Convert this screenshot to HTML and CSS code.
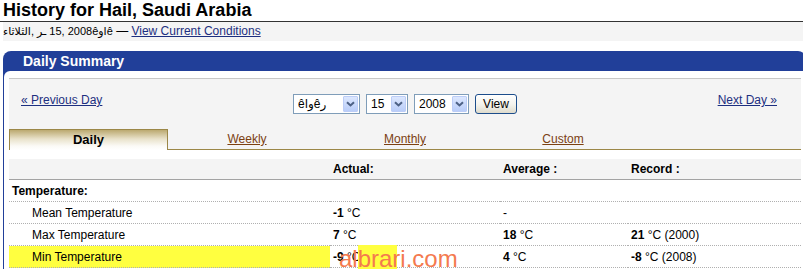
FILE: index.html
```html
<!DOCTYPE html>
<html>
<head>
<meta charset="utf-8">
<title>History for Hail, Saudi Arabia</title>
<link rel="stylesheet" href="styles.css">
</head>
<body>
<div class="page">
  <h1 class="title">History for Hail, Saudi Arabia</h1>
  <div class="subline"><span class="date"><bdi>الثلاثاء</bdi>, <bdi>ـر</bdi> 15, 2008<bdo dir="ltr">êواê</bdo></span> — <a href="#" class="link">View Current Conditions</a></div>

  <div class="box">
    <div class="box-head">Daily Summary</div>
    <div class="box-body">
      <div class="panel">
        <div class="nav">
          <a href="#" class="link nav-prev">« Previous Day</a>
          <form class="picker">
            <div class="select w-month"><span class="sel-text"><bdo dir="ltr">êاوêر</bdo></span><span class="sel-btn"><svg width="9" height="6" viewBox="0 0 9 6"><path d="M1 1.2 L4.5 4.5 L8 1.2" fill="none" stroke="#4d6185" stroke-width="2"/></svg></span></div>
            <div class="select w-day"><span class="sel-text">15</span><span class="sel-btn"><svg width="9" height="6" viewBox="0 0 9 6"><path d="M1 1.2 L4.5 4.5 L8 1.2" fill="none" stroke="#4d6185" stroke-width="2"/></svg></span></div>
            <div class="select w-year"><span class="sel-text">2008</span><span class="sel-btn"><svg width="9" height="6" viewBox="0 0 9 6"><path d="M1 1.2 L4.5 4.5 L8 1.2" fill="none" stroke="#4d6185" stroke-width="2"/></svg></span></div>
            <button class="view-btn" type="button">View</button>
          </form>
          <a href="#" class="link nav-next">Next Day »</a>
        </div>
        <div class="tabs">
          <div class="tab active">Daily</div>
          <div class="tab"><a href="#" class="tab-link">Weekly</a></div>
          <div class="tab"><a href="#" class="tab-link">Monthly</a></div>
          <div class="tab"><a href="#" class="tab-link">Custom</a></div>
        </div>
      </div>

      <table class="summary">
        <colgroup><col class="c1"><col class="c2"><col class="c3"><col class="c4"></colgroup>
        <thead>
          <tr><th></th><th>Actual:</th><th>Average :</th><th>Record :</th></tr>
        </thead>
        <tbody>
          <tr><td class="group">Temperature:</td><td></td><td></td><td></td></tr>
          <tr><td class="indent">Mean Temperature</td><td><b>-1</b>&nbsp;°C</td><td>-</td><td></td></tr>
          <tr><td class="indent">Max Temperature</td><td><b>7</b>&nbsp;°C</td><td><b>18</b>&nbsp;°C</td><td><b>21</b>&nbsp;°C (2000)</td></tr>
          <tr class="hl"><td class="indent">Min Temperature</td><td><b>-9</b>&nbsp;°C</td><td><b>4</b>&nbsp;°C</td><td><b>-8</b>&nbsp;°C (2008)</td></tr>
        </tbody>
      </table>
    </div>
  </div>

  <div class="watermark"><span class="wm-hl">albrari</span>.com</div>
</div>
</body>
</html>
```

FILE: styles.css
```css
html {
  overflow: hidden;
}

body {
  margin: 0;
  font-family: "Liberation Sans", Arial, "DejaVu Sans", sans-serif;
  font-size: 12px;
  color: #000;
  background: #fff;
}

.page {
  position: relative;
  width: 809px;
}

.title {
  margin: 0;
  padding-left: 3px;
  font-size: 18px;
  font-weight: bold;
  line-height: 21px;
  border-bottom: 1px solid #333;
}

.subline {
  margin-left: 3px;
  height: 19px;
  line-height: 19px;
  background: #f4f4f4;
  white-space: nowrap;
}

.date {
  font-size: 11px;
}

.link {
  color: #1d2f80;
  text-decoration: underline;
}

/* Daily Summary box */
.box {
  margin: 10px 0 0 3px;
  width: 803px;
  background: #213f99;
  border-radius: 8px 8px 0 0;
}

.box-head {
  height: 20px;
  line-height: 20px;
  padding-left: 20px;
  color: #fff;
  font-size: 14px;
  font-weight: bold;
}

.box-body {
  margin-left: 1px;
  padding: 7px 0 10px 5px;
  background: #fff;
  border-top-left-radius: 6px;
}

.panel {
  width: 792px;
  background: #f4f4f4;
  border-top: 1px solid #c8c8c8;
  padding-top: 15px;
}

.nav {
  display: grid;
  grid-template-columns: 1fr auto 1fr;
  align-items: start;
  height: 20px;
  padding: 0 12px;
}

.nav .link {
  line-height: 12px;
}

.nav-prev {
  justify-self: start;
}

.nav-next {
  justify-self: end;
  margin-right: 12px;
}

.picker {
  display: flex;
  gap: 6px;
  margin: 0;
}

.select {
  display: flex;
  align-items: center;
  box-sizing: border-box;
  height: 20px;
  padding: 0 1px 0 4px;
  border: 1px solid #7f9db9;
  background: #fff;
}

.sel-text {
  flex: 1;
  line-height: 18px;
  white-space: nowrap;
  overflow: hidden;
}

.sel-btn {
  display: flex;
  align-items: center;
  justify-content: center;
  box-sizing: border-box;
  width: 15px;
  height: 16px;
  border: 1px solid #bccdf7;
  border-radius: 1px;
  background: linear-gradient(#dce7fe, #b9cdf9);
}

.w-month { width: 67px; }
.w-day { width: 42px; }
.w-year { width: 55px; }

.view-btn {
  box-sizing: border-box;
  width: 42px;
  height: 20px;
  padding: 0;
  border: 1px solid #1c4d8b;
  border-radius: 3px;
  background: linear-gradient(#ffffff, #f3f2ec 55%, #dedbcc);
  font-family: "Liberation Sans", Arial, sans-serif;
  font-size: 12px;
  color: #000;
}

/* Tabs */
.tabs {
  display: flex;
  height: 20px;
  margin-top: 15px;
  border-bottom: 1px solid #9b8747;
}

.tab {
  box-sizing: border-box;
  width: 158px;
  padding-top: 2px;
  line-height: 16px;
  text-align: center;
}

.tab.active {
  align-self: flex-start;
  width: 159px;
  height: 21px;
  padding-top: 2px;
  border: 1px solid #9b8747;
  border-bottom: 0;
  background: linear-gradient(#bba970, #e9e2cb 45%, #fbfaf6 80%, #fff);
  font-size: 13px;
  font-weight: bold;
}

.tab-link {
  color: #7b4012;
  text-decoration: underline;
}

/* Table */
.summary {
  width: 792px;
  margin-top: 9px;
  border-collapse: separate;
  border-spacing: 0;
  table-layout: fixed;
}

.c1 { width: 321px; }
.c2 { width: 170px; }
.c3 { width: 128px; }
.c4 { width: 173px; }

.summary th {
  padding: 1px 3px 0;
  line-height: 19px;
  text-align: left;
  font-weight: bold;
  background: #f4f4f4;
  border-bottom: 1px solid #a3a3a3;
}

.summary td {
  padding: 1px 3px 0;
  line-height: 20px;
  white-space: nowrap;
  border-bottom: 1px dotted #b0b0b0;
}

.summary td.group {
  font-weight: bold;
}

.summary td.indent {
  padding-left: 23px;
}

.hl td:first-child {
  background: #ffff40;
}

/* Watermark overlay */
.watermark {
  position: absolute;
  left: 339px;
  top: 247px;
  font-size: 24px;
  line-height: 24px;
  color: #f47a4f;
  white-space: nowrap;
}

.wm-hl {
  background: linear-gradient(to right, transparent 19px, #ffff40 19px, #ffff40 58px, transparent 58px);
}
```
